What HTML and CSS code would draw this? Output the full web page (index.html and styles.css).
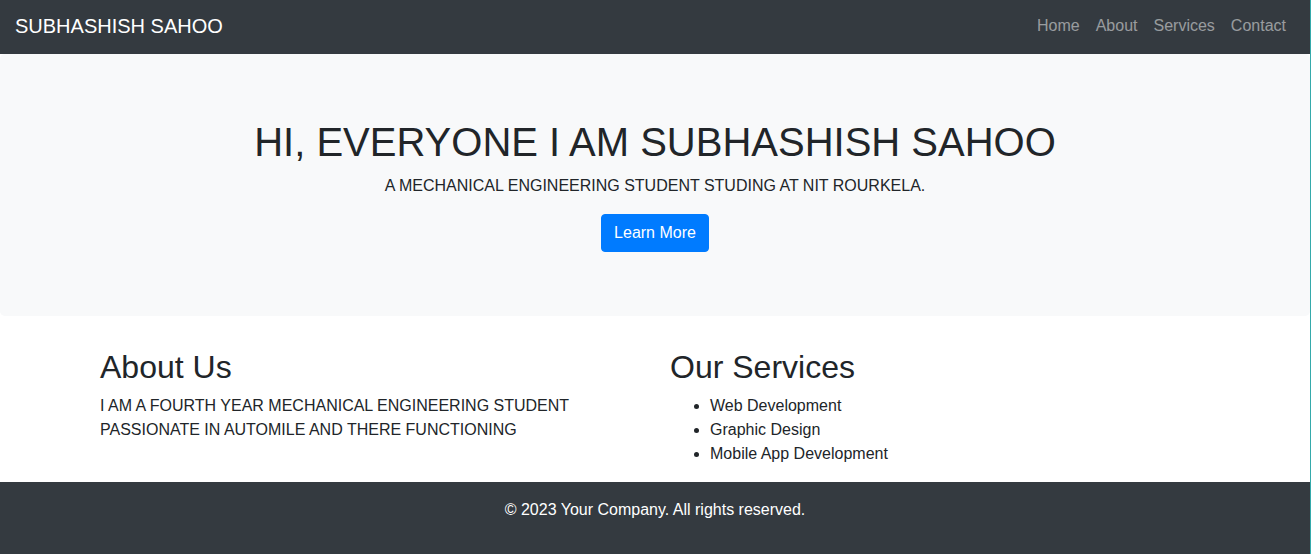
FILE: index.html
```html
<!DOCTYPE html>
<html lang="en">
<head>
<meta charset="utf-8">
<title>Subhashish Sahoo</title>
<link rel="stylesheet" href="styles.css">
</head>
<body>
<nav class="navbar">
  <a class="brand" href="#">SUBHASHISH SAHOO</a>
  <ul class="nav">
    <li><a class="nav-link" href="#">Home</a></li>
    <li><a class="nav-link" href="#">About</a></li>
    <li><a class="nav-link" href="#">Services</a></li>
    <li><a class="nav-link" href="#">Contact</a></li>
  </ul>
</nav>
<section class="jumbotron">
  <h1 class="hero-title">HI, EVERYONE I AM SUBHASHISH SAHOO</h1>
  <p class="hero-text">A MECHANICAL ENGINEERING STUDENT STUDING AT NIT ROURKELA.</p>
  <a class="btn" href="#">Learn More</a>
</section>
<main class="container">
  <div class="row">
    <div class="col">
      <h2 class="section-title">About Us</h2>
      <p class="section-text">I AM A FOURTH YEAR MECHANICAL ENGINEERING STUDENT PASSIONATE IN AUTOMILE AND THERE FUNCTIONING</p>
    </div>
    <div class="col">
      <h2 class="section-title">Our Services</h2>
      <ul class="services">
        <li>Web Development</li>
        <li>Graphic Design</li>
        <li>Mobile App Development</li>
      </ul>
    </div>
  </div>
</main>
<footer class="footer">
  <p class="footer-text">© 2023 Your Company. All rights reserved.</p>
</footer>
</body>
</html>
```

FILE: styles.css
```css
html {
  background: #35aaab;
}
body {
  margin: 0 1px 0 0;
  background: #fff;
  font-family: "Liberation Sans", Arial, sans-serif;
  font-size: 16px;
  line-height: 1.5;
  color: #212529;
  min-height: 554px;
}
a { text-decoration: none; }

.navbar {
  background: #343a40;
  display: flex;
  align-items: center;
  justify-content: space-between;
  padding: 7px 16px 9px 15px;
  height: 38px;
}
.brand {
  color: #fff;
  font-size: 20px;
  line-height: 30px;
}
.nav {
  display: flex;
  list-style: none;
  margin: 0;
  padding: 0;
}
.nav-link {
  display: block;
  padding: 8px 8px;
  color: rgba(255, 255, 255, 0.5);
  line-height: 24px;
}

.jumbotron {
  background: #f8f9fa;
  border-radius: 0.3rem;
  padding: 64px 32px;
  margin: 0 0 32px;
  text-align: center;
}
.hero-title {
  margin: 0 0 8px;
  font-size: 40px;
  font-weight: 400;
  line-height: 48px;
}
.hero-text {
  margin: 0 0 16px;
}
.btn {
  display: inline-block;
  background: #007bff;
  color: #fff;
  border: 1px solid #007bff;
  border-radius: 0.25rem;
  padding: 6px 12px;
  line-height: 24px;
  vertical-align: top;
}

.container {
  box-sizing: border-box;
  max-width: 1140px;
  margin: 0 auto;
  padding: 0 15px;
}
.row {
  display: flex;
  margin: 0 -15px;
}
.col {
  flex: 0 0 50%;
  box-sizing: border-box;
  padding: 0 15px;
}
.section-title {
  margin: 0 0 8px;
  font-size: 32px;
  font-weight: 400;
  line-height: 1.2;
}
.section-text {
  margin: 0 0 16px;
}
.services {
  margin: 0 0 16px;
  padding-left: 40px;
}

.footer {
  background: #343a40;
  color: #fff;
  text-align: center;
  padding: 16px;
}
.footer-text {
  margin: 0 0 16px;
}
```
